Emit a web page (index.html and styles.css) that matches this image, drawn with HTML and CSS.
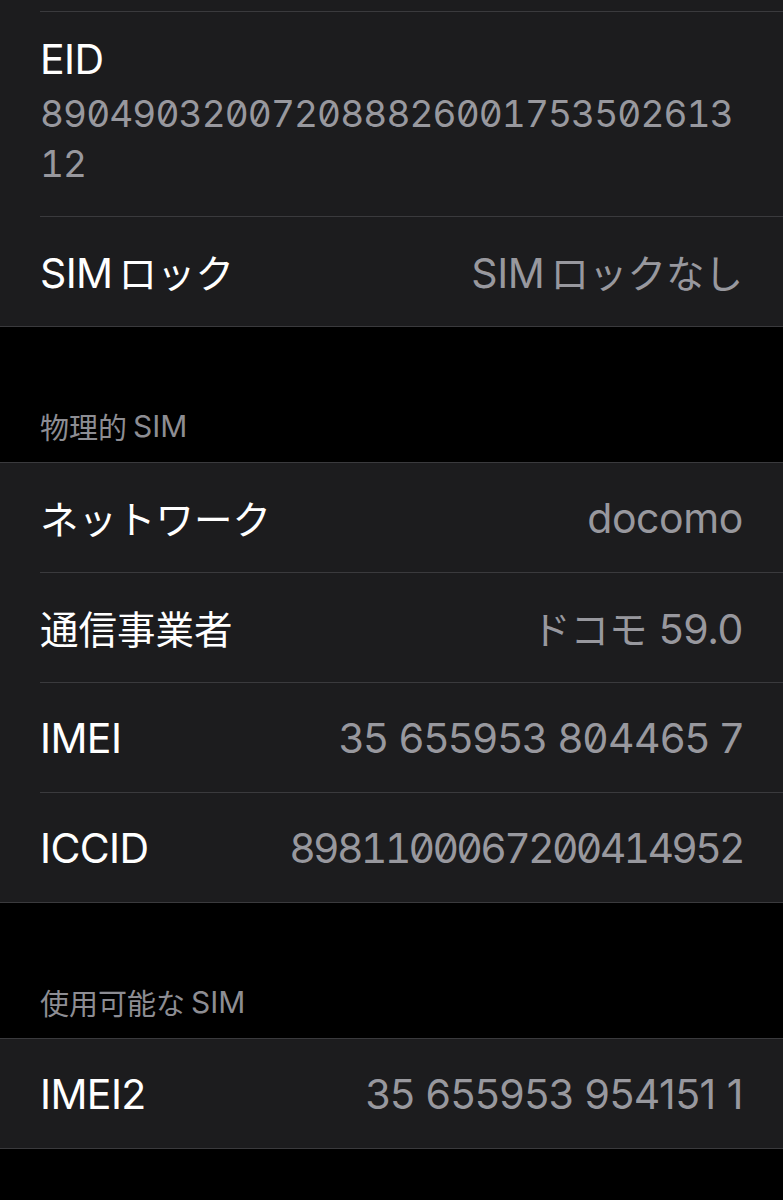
FILE: index.html
```html
<!DOCTYPE html>
<html lang="ja">
<head>
<meta charset="utf-8">
<title>SIM情報</title>
<link rel="stylesheet" href="styles.css">
</head>
<body>
<div class="page">
  <section class="group group-first">
    <div class="row row-partial"><div class="row-inner"></div></div>
    <div class="row row-sub">
      <div class="row-inner sub-inner">
        <div class="label">EID</div>
        <div class="subvalue">89049032007208882600175350261312</div>
      </div>
    </div>
    <div class="row">
      <div class="row-inner last">
        <span class="label">SIM<span class="ja gap">ロック</span></span>
        <span class="value">SIM<span class="ja gap">ロックなし</span></span>
      </div>
    </div>
  </section>

  <div class="header"><span class="ja-h">物理的</span><span class="gap-h">SIM</span></div>
  <section class="group">
    <div class="row"><div class="row-inner"><span class="label"><span class="ja">ネットワーク</span></span><span class="value">docomo</span></div></div>
    <div class="row"><div class="row-inner"><span class="label"><span class="ja">通信事業者</span></span><span class="value"><span class="ja">ドコモ</span> 59.0</span></div></div>
    <div class="row"><div class="row-inner"><span class="label">IMEI</span><span class="value imei">35 655953 804465 7</span></div></div>
    <div class="row"><div class="row-inner last"><span class="label">ICCID</span><span class="value num iccid">8981100067200414952</span></div></div>
  </section>

  <div class="header"><span class="ja-h">使用可能な</span><span class="gap-h">SIM</span></div>
  <section class="group">
    <div class="row"><div class="row-inner last"><span class="label">IMEI2</span><span class="value imei">35 655953 954151 1</span></div></div>
  </section>
</div>
</body>
</html>
```

FILE: styles.css
```css
html, body {
  margin: 0;
  padding: 0;
  background: #000000;
}
body {
  font-family: "Inter", "Noto Sans CJK JP", sans-serif;
  color: #ffffff;
  width: 783px;
  overflow: hidden;
}
.page {
  display: flex;
  flex-direction: column;
}
.group {
  background: #1c1c1e;
  border-top: 1px solid #3a3a3d;
  border-bottom: 1px solid #3a3a3d;
}
.group-first {
  border-top: none;
}
.row {
  padding-left: 40px;
}
.row-inner {
  height: 109px;
  box-sizing: content-box;
  border-bottom: 1px solid #3a3a3d;
  padding-right: 40px;
  display: flex;
  align-items: center;
  justify-content: space-between;
}
.row-inner.last {
  border-bottom: none;
}
.row-partial .row-inner {
  height: 11px;
}
.sub-inner {
  height: 204px;
  flex-direction: column;
  align-items: flex-start;
  justify-content: flex-start;
}
.label {
  font-size: 41px;
  line-height: 50px;
  color: #ffffff;
  letter-spacing: -0.6px;
}
.sub-inner .label {
  margin-top: 22px;
}
.subvalue {
  font-size: 37px;
  line-height: 50px;
  margin-top: 5px;
  color: #98989e;
  font-feature-settings: "tnum" 1, "zero" 1;
  letter-spacing: -0.9px;
  word-break: break-all;
  width: 703px;
}
.value {
  font-size: 41px;
  line-height: 50px;
  color: #98989e;
  letter-spacing: -0.4px;
}
.value.num {
  font-feature-settings: "tnum" 1, "zero" 1;
}
.value.imei {
  font-feature-settings: "zero" 1;
  letter-spacing: -0.5px;
}
.value.iccid {
  letter-spacing: -2.7px;
}
.ja {
  font-family: "Noto Sans CJK JP", sans-serif;
  font-size: 38.5px;
  letter-spacing: 0;
}
.gap {
  margin-left: 6px;
}
.header {
  height: 135px;
  box-sizing: border-box;
  display: flex;
  align-items: flex-end;
  padding: 0 40px 16px;
  font-size: 30px;
  line-height: 40px;
  color: #8d8d93;
}
.ja-h {
  font-family: "Noto Sans CJK JP", sans-serif;
  font-size: 29px;
}
.gap-h {
  margin-left: 6px;
}
```
